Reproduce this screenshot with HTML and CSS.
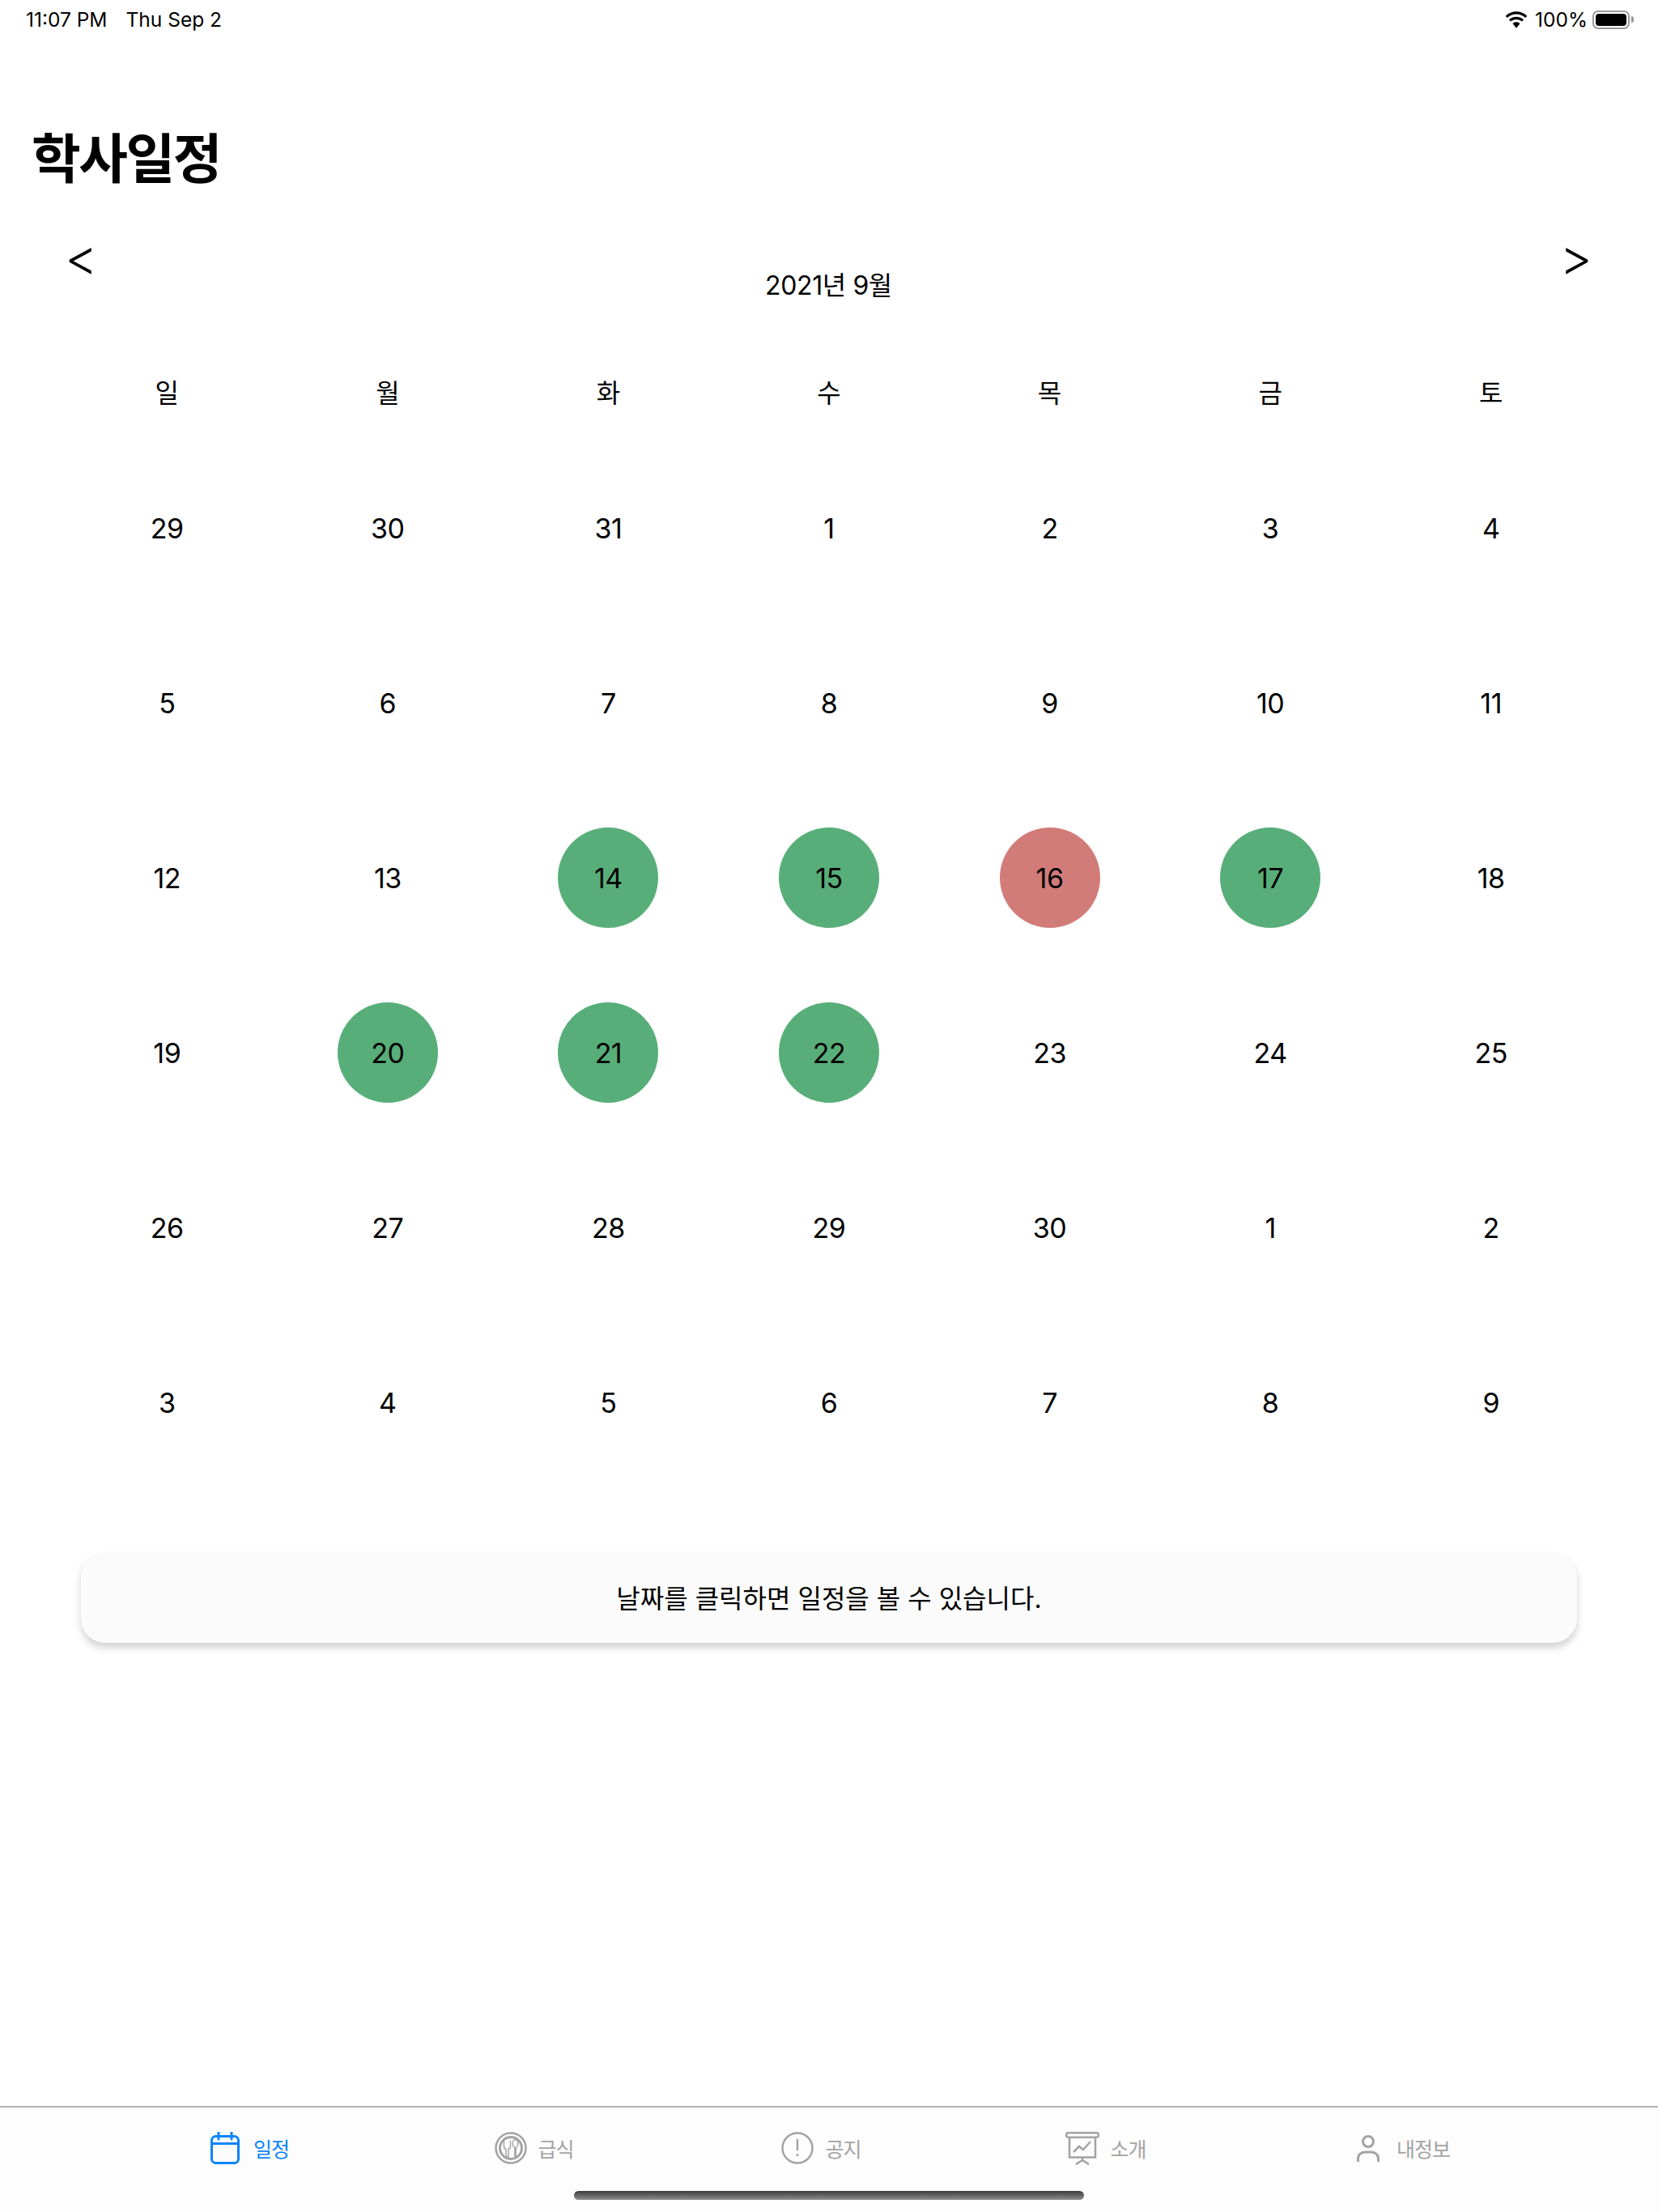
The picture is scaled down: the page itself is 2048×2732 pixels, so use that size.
FILE: index.html
```html
<!DOCTYPE html>
<html lang="ko">
<head>
    <title>학사일정</title>
    <link rel="stylesheet" href="styles.css">
</head>
<body>
    <div class="page">
        <div class="status_bar">
            <div class="status_left">
                <span>11:07 PM</span>
                <span>Thu Sep 2</span>
            </div>
            <div class="status_right">
                <svg class="wifi" width="28" height="21" viewBox="1.500 0 25 19">
                    <path d="M14 3.2c3.9 0 7.4 1.500 10.100 4l1.900-2.100C22.800 2.100 18.600.3 14 .3S5.200 2.100 2 5.100l1.900 2.100c2.700-2.500 6.200-4 10.100-4z"/>
                    <path d="M14 9c2.400 0 4.500.9 6.200 2.400l2-2.100C20 7.300 17.200 6.100 14 6.100s-6 1.200-8.200 3.200l2 2.100C9.500 9.900 11.600 9 14 9z"/>
                    <path d="M14 12c-1.600 0-3 .6-4.100 1.600L14 18.800l4.100-5.200C17 12.600 15.600 12 14 12z"/>
                </svg>
                <span>100%</span>
                <div class="battery"><div class="battery_level"></div></div>
                <div class="battery_cap"></div>
            </div>
        </div>

        <h1 class="title">학사일정</h1>

        <div class="month_nav">
            <span class="month_arrow">&lt;</span>
            <span class="month_name">2021년 9월</span>
            <span class="month_arrow">&gt;</span>
        </div>

        <div class="weekdays">
            <div>일</div><div>월</div><div>화</div><div>수</div><div>목</div><div>금</div><div>토</div>
        </div>

        <div class="days">
            <div class="day"><span>29</span></div>
            <div class="day"><span>30</span></div>
            <div class="day"><span>31</span></div>
            <div class="day"><span>1</span></div>
            <div class="day"><span>2</span></div>
            <div class="day"><span>3</span></div>
            <div class="day"><span>4</span></div>

            <div class="day"><span>5</span></div>
            <div class="day"><span>6</span></div>
            <div class="day"><span>7</span></div>
            <div class="day"><span>8</span></div>
            <div class="day"><span>9</span></div>
            <div class="day"><span>10</span></div>
            <div class="day"><span>11</span></div>

            <div class="day"><span>12</span></div>
            <div class="day"><span>13</span></div>
            <div class="day"><span class="green">14</span></div>
            <div class="day"><span class="green">15</span></div>
            <div class="day"><span class="red">16</span></div>
            <div class="day"><span class="green">17</span></div>
            <div class="day"><span>18</span></div>

            <div class="day"><span>19</span></div>
            <div class="day"><span class="green">20</span></div>
            <div class="day"><span class="green">21</span></div>
            <div class="day"><span class="green">22</span></div>
            <div class="day"><span>23</span></div>
            <div class="day"><span>24</span></div>
            <div class="day"><span>25</span></div>

            <div class="day"><span>26</span></div>
            <div class="day"><span>27</span></div>
            <div class="day"><span>28</span></div>
            <div class="day"><span>29</span></div>
            <div class="day"><span>30</span></div>
            <div class="day"><span>1</span></div>
            <div class="day"><span>2</span></div>

            <div class="day"><span>3</span></div>
            <div class="day"><span>4</span></div>
            <div class="day"><span>5</span></div>
            <div class="day"><span>6</span></div>
            <div class="day"><span>7</span></div>
            <div class="day"><span>8</span></div>
            <div class="day"><span>9</span></div>
        </div>

        <div class="notice">날짜를 클릭하면 일정을 볼 수 있습니다.</div>

        <div class="tab_bar">
            <div class="tabs">
                <div class="tab active tab_schedule">
                    <svg width="36" height="40" viewBox="0 0 36 40" fill="none" stroke="#0a84ff" stroke-width="3">
                        <rect x="1.500" y="5.500" width="33" height="33" rx="5"/>
                        <path d="M1.500 14.500h33M10 1v8M26 1v8" stroke-linecap="round"/>
                    </svg>
                    <span>일정</span>
                </div>
                <div class="tab tab_meal">
                    <svg width="40" height="40" viewBox="0 0 40 40" fill="none" stroke="#a3a3a3">
                        <circle cx="20" cy="20" r="18.500" stroke-width="2.500"/>
                        <circle cx="20" cy="20" r="13.500" stroke-width="3"/>
                        <path d="M11.500 11v7c0 2 1 3 2.500 3.500V31h3V21.500c1.500-.5 2.500-1.500 2.500-3.500v-7" fill="#fff" stroke-width="1.500"/>
                        <ellipse cx="25.500" cy="14.500" rx="3.200" ry="5" fill="#fff" stroke-width="1.500"/>
                        <path d="M25.500 19.500V31" stroke-width="2.800"/>
                    </svg>
                    <span>급식</span>
                </div>
                <div class="tab tab_notice">
                    <svg width="40" height="40" viewBox="0 0 40 40" fill="none" stroke="#a3a3a3">
                        <circle cx="20" cy="20" r="18.500" stroke-width="2.500"/>
                        <path d="M20 10v12" stroke-width="2.500" stroke-linecap="round"/>
                        <circle cx="20" cy="28.500" r="1.600" fill="#a3a3a3" stroke="none"/>
                    </svg>
                    <span>공지</span>
                </div>
                <div class="tab tab_about">
                    <svg width="42" height="41" viewBox="0 0 42 41" fill="none" stroke="#a3a3a3" stroke-width="2.500">
                        <rect x="1.200" y="1.200" width="39.600" height="5.500" rx="2"/>
                        <path d="M5 7v24.500h32V7M21 31.500v4M13 40l8-5 8 5M10 25l7-7 5 4 9-10"/>
                    </svg>
                    <span>소개</span>
                </div>
                <div class="tab tab_profile">
                    <svg width="28" height="33" viewBox="0 0 28 33" fill="none" stroke="#a3a3a3" stroke-width="3">
                        <circle cx="14" cy="8" r="6.500"/>
                        <path d="M1.500 33v-4c0-5 4-8 9-8h7c5 0 9 3 9 8v4"/>
                    </svg>
                    <span>내정보</span>
                </div>
            </div>
            <div class="home_indicator"></div>
        </div>
    </div>
</body>
</html>
```

FILE: styles.css
```css
body {
    margin: 0;
    padding: 0;
    background-color: #fff;
    color: #000;
    font-family: Inter, "Noto Sans CJK KR", sans-serif;
}

.page {
    display: flex;
    flex-direction: column;
    height: 2732px;
    overflow: hidden;
}

.status_bar {
    display: flex;
    justify-content: space-between;
    align-items: center;
    height: 48px;
    padding: 0 30px 0 32px;
    font-size: 24.500px;
    box-sizing: border-box;
}

.status_left {
    display: flex;
    gap: 23px;
}

.status_right {
    display: flex;
    align-items: center;
    gap: 6px;
}

.wifi {
    margin-right: 3px;
}

.battery {
    width: 46px;
    height: 23px;
    box-sizing: border-box;
    border: 2px solid #999;
    border-radius: 7px;
    padding: 2px;
}

.battery_level {
    height: 100%;
    background-color: #000;
    border-radius: 4px;
}

.battery_cap {
    width: 3px;
    height: 8px;
    margin-left: -4px;
    background-color: #999;
    border-radius: 0 3px 3px 0;
}

.title {
    margin: 113px 0 0 39px;
    height: 70px;
    font-size: 66px;
    line-height: 70px;
    font-weight: 700;
    letter-spacing: -2.500px;
}

.month_nav {
    display: flex;
    justify-content: space-between;
    margin-top: 57px;
    padding: 0 81px 0 80px;
    height: 80px;
}

.month_arrow {
    font-size: 62px;
    line-height: 60px;
    font-weight: 300;
}

.month_name {
    font-size: 32px;
    line-height: 40px;
    margin-top: 45px;
    letter-spacing: -0.400px;
}

.weekdays,
.days {
    display: grid;
    grid-template-columns: repeat(7, 1fr);
    margin: 0 70px;
    text-align: center;
}

.weekdays {
    margin-top: 98px;
    font-size: 32px;
    line-height: 40px;
}

.days {
    grid-auto-rows: 216px;
    margin-top: 38px;
    font-size: 34px;
    letter-spacing: -0.500px;
}

.day {
    display: flex;
    align-items: center;
    justify-content: center;
}

.day span {
    display: flex;
    align-items: center;
    justify-content: center;
    width: 124px;
    height: 124px;
    border-radius: 50%;
}

.green {
    background-color: #58ae79;
}

.red {
    background-color: #d27c79;
}

.notice {
    margin: 78px 100px 0;
    height: 111px;
    padding-bottom: 4px;
    box-sizing: border-box;
    display: flex;
    align-items: center;
    justify-content: center;
    background-color: #fbfbfb;
    border-radius: 30px;
    box-shadow: 0 6px 10px rgba(50, 50, 60, 0.22);
    font-size: 32px;
}

.tab_bar {
    margin-top: auto;
    height: 131px;
    background-color: #fdfdfd;
    border-top: 2px solid #b4b4b4;
    box-sizing: border-box;
    position: relative;
}

.tabs {
    display: grid;
    grid-template-columns: repeat(5, 353px);
    padding: 29px 0 0 132px;
}

.tab {
    display: flex;
    align-items: center;
    justify-content: center;
    height: 42px;
    font-size: 25px;
    letter-spacing: -1px;
    color: #a3a3a3;
}

.tab.active {
    color: #0a84ff;
}

.tab_schedule {
    gap: 17px;
}

.tab_meal {
    gap: 13px;
    padding-right: 3px;
}

.tab_notice {
    gap: 14px;
}

.tab_about {
    gap: 13px;
    padding-right: 3px;
}

.tab_profile {
    gap: 21px;
    margin-left: 26px;
}

.home_indicator {
    position: absolute;
    left: 709px;
    top: 103px;
    width: 630px;
    height: 11px;
    border-radius: 6px;
    background: linear-gradient(#3c3c3c, #8e8e8e);
}
```
